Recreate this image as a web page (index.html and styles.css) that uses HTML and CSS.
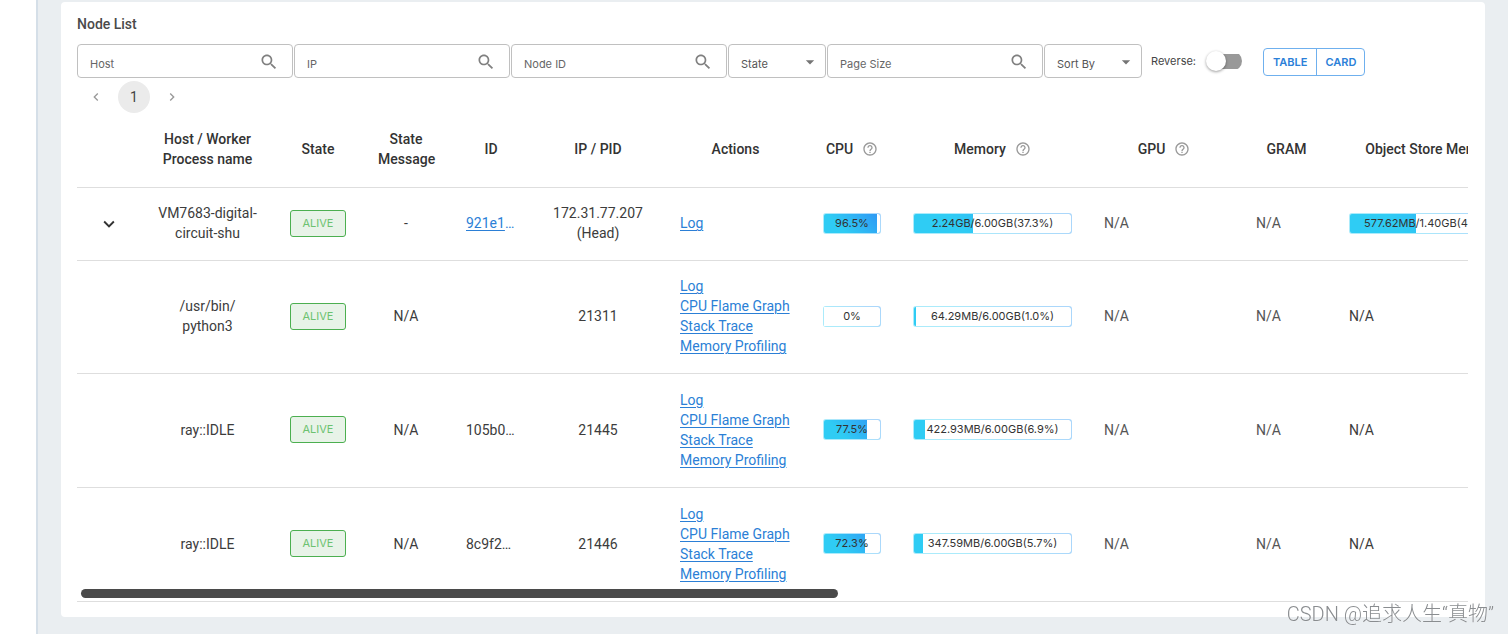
FILE: index.html
```html
<!DOCTYPE html>
<html lang="en">
<head>
<meta charset="utf-8">
<title>Node List</title>
<link rel="stylesheet" href="styles.css">
</head>
<body>
<svg class="sprite" aria-hidden="true">
  <symbol id="search" viewBox="0 0 24 24"><path d="M15.5 14h-.79l-.28-.27C15.41 12.59 16 11.11 16 9.5 16 5.91 13.09 3 9.5 3S3 5.91 3 9.5 5.91 16 9.5 16c1.61 0 3.09-.59 4.23-1.57l.27.28v.79l5 4.99L20.49 19l-4.99-5zm-6 0C7.01 14 5 11.99 5 9.5S7.01 5 9.5 5 14 7.01 14 9.5 11.99 14 9.5 14z"/></symbol>
  <symbol id="drop" viewBox="0 0 24 24"><path d="M7 10l5 5 5-5z"/></symbol>
  <symbol id="prev" viewBox="0 0 24 24"><path d="M15.41 7.41L14 6l-6 6 6 6 1.41-1.41L10.83 12z"/></symbol>
  <symbol id="next" viewBox="0 0 24 24"><path d="M10 6L8.59 7.41 13.17 12l-4.58 4.59L10 18l6-6z"/></symbol>
  <symbol id="expand" viewBox="0 0 24 24"><path d="M16.59 8.59L12 13.17 7.41 8.59 6 10l6 6 6-6z"/></symbol>
  <symbol id="help" viewBox="0 0 24 24"><path d="M11 18h2v-2h-2v2zm1-16C6.48 2 2 6.48 2 12s4.48 10 10 10 10-4.48 10-10S17.52 2 12 2zm0 18c-4.41 0-8-3.59-8-8s3.59-8 8-8 8 3.59 8 8-3.59 8-8 8zm0-14c-2.21 0-4 1.79-4 4h2c0-1.1.9-2 2-2s2 .9 2 2c0 2-3 1.75-3 5h2c0-2.25 3-2.5 3-5 0-2.21-1.79-4-4-4z"/></symbol>
</svg>
<div class="app">
  <aside class="rail"></aside>
  <main class="main">
    <section class="card">
      <h2 class="title">Node List</h2>
      <form class="filters">
        <label class="field"><input type="text" placeholder="Host" aria-label="Host"><svg class="search-icon"><use href="#search"/></svg></label>
        <label class="field"><input type="text" placeholder="IP" aria-label="IP"><svg class="search-icon"><use href="#search"/></svg></label>
        <label class="field"><input type="text" placeholder="Node ID" aria-label="Node ID"><svg class="search-icon"><use href="#search"/></svg></label>
        <label class="field field-select"><select aria-label="State"><option>State</option></select><svg class="drop-icon"><use href="#drop"/></svg></label>
        <label class="field"><input type="text" placeholder="Page Size" aria-label="Page Size"><svg class="search-icon"><use href="#search"/></svg></label>
        <label class="field field-select"><select aria-label="Sort By"><option>Sort By</option></select><svg class="drop-icon"><use href="#drop"/></svg></label>
        <label class="reverse">Reverse:<input class="switch" type="checkbox"></label>
        <div class="view-group"><button type="button">TABLE</button><button type="button">CARD</button></div>
      </form>
      <nav class="pager" aria-label="Pages">
        <button type="button" aria-label="Previous page"><svg><use href="#prev"/></svg></button>
        <button type="button" class="current">1</button>
        <button type="button" aria-label="Next page"><svg><use href="#next"/></svg></button>
      </nav>
      <div class="table-box">
        <table class="nodes">
          <colgroup>
            <col class="c-expand"><col class="c-host"><col class="c-state"><col class="c-message"><col class="c-id"><col class="c-ip"><col class="c-actions"><col class="c-cpu"><col class="c-memory"><col class="c-gpu"><col class="c-gram"><col class="c-store">
          </colgroup>
          <thead>
            <tr>
              <th></th><th>Host / Worker Process name</th><th>State</th><th>State Message</th><th>ID</th><th>IP / PID</th><th>Actions</th>
              <th><span class="head">CPU<svg><use href="#help"/></svg></span></th>
              <th><span class="head">Memory<svg><use href="#help"/></svg></span></th>
              <th><span class="head">GPU<svg><use href="#help"/></svg></span></th>
              <th>GRAM</th><th>Object Store Memory</th>
            </tr>
          </thead>
          <tbody>
            <tr>
              <td><button type="button" class="toggle" aria-label="Collapse"><svg><use href="#expand"/></svg></button></td>
              <td>VM7683-digital-circuit-shu</td>
              <td><span class="chip">ALIVE</span></td>
              <td>-</td>
              <td class="left"><a class="id-link" href="#node"><span>921e1</span>…</a></td>
              <td>172.31.77.207 (Head)</td>
              <td class="left"><div class="actions"><a href="#log">Log</a></div></td>
              <td><div class="bar"><i style="width:6%"></i><span>96.5%</span></div></td>
              <td><div class="bar"><i style="width:62.7%"></i><span>2.24GB/6.00GB(37.3%)</span></div></td>
              <td class="left soft">N/A</td><td class="left soft">N/A</td>
              <td><div class="bar"><i style="width:59.7%"></i><span>577.62MB/1.40GB(40.3%)</span></div></td>
            </tr>
            <tr class="first-worker">
              <td></td>
              <td>/usr/bin/<br>python3</td>
              <td><span class="chip">ALIVE</span></td>
              <td>N/A</td>
              <td></td>
              <td>21311</td>
              <td class="left"><div class="actions"><a href="#log">Log</a><a href="#flame">CPU Flame Graph</a><a href="#stack">Stack Trace</a><a href="#memory">Memory Profiling</a></div></td>
              <td><div class="bar"><i style="width:100%"></i><span>0%</span></div></td>
              <td><div class="bar"><i style="width:99%"></i><span>64.29MB/6.00GB(1.0%)</span></div></td>
              <td class="left soft">N/A</td><td class="left soft">N/A</td><td class="left">N/A</td>
            </tr>
            <tr class="worker">
              <td></td>
              <td>ray::IDLE</td>
              <td><span class="chip">ALIVE</span></td>
              <td>N/A</td>
              <td class="left">105b0…</td>
              <td>21445</td>
              <td class="left"><div class="actions"><a href="#log">Log</a><a href="#flame">CPU Flame Graph</a><a href="#stack">Stack Trace</a><a href="#memory">Memory Profiling</a></div></td>
              <td><div class="bar"><i style="width:22.5%"></i><span>77.5%</span></div></td>
              <td><div class="bar"><i style="width:93.1%"></i><span>422.93MB/6.00GB(6.9%)</span></div></td>
              <td class="left soft">N/A</td><td class="left soft">N/A</td><td class="left">N/A</td>
            </tr>
            <tr class="worker">
              <td></td>
              <td>ray::IDLE</td>
              <td><span class="chip">ALIVE</span></td>
              <td>N/A</td>
              <td class="left">8c9f2…</td>
              <td>21446</td>
              <td class="left"><div class="actions"><a href="#log">Log</a><a href="#flame">CPU Flame Graph</a><a href="#stack">Stack Trace</a><a href="#memory">Memory Profiling</a></div></td>
              <td><div class="bar"><i style="width:27.7%"></i><span>72.3%</span></div></td>
              <td><div class="bar"><i style="width:94.3%"></i><span>347.59MB/6.00GB(5.7%)</span></div></td>
              <td class="left soft">N/A</td><td class="left soft">N/A</td><td class="left">N/A</td>
            </tr>
          </tbody>
        </table>
        <div class="scroll-thumb"></div>
      </div>
    </section>
  </main>
</div>
<div class="watermark">CSDN @追求人生“真物”</div>
</body>
</html>
```
FILE: styles.css
```css
* { box-sizing: border-box; }

body {
  margin: 0;
  font: 14px/20px Roboto, "Liberation Sans", sans-serif;
  color: #3c3c3c;
  background: #eaeef1;
}

button, input, select { font: inherit; color: inherit; margin: 0; }
button { padding: 0; border: 0; background: none; cursor: pointer; }
svg { display: block; fill: currentColor; }
a { color: #2b7fd6; text-decoration: underline; text-underline-offset: 2px; text-decoration-thickness: 1px; }

.sprite { position: absolute; width: 0; height: 0; }

.app { display: flex; min-height: 100vh; }
.rail { flex: none; width: 38px; background: #fff; border-right: 2px solid #d5dfe8; }
.main { flex: 1; min-width: 0; padding: 2px 23px 16px; }
.card { padding: 12px 17px 15px 16px; background: #fff; border-radius: 4px; }
.title { margin: 0 0 10px; font-size: 14px; line-height: 20px; font-weight: 500; color: #4a4a4a; }

.filters { display: flex; align-items: center; gap: 1px; font: 11px/16px Inter, Roboto, sans-serif; color: #555; }
.field { position: relative; width: 216px; height: 34px; }
.field-select { width: 98px; }
.field input, .field select {
  width: 100%;
  height: 100%;
  padding: 5px 40px 0 12px;
  border: 1px solid #c0c0c0;
  border-radius: 4px;
  background: #fff;
  appearance: none;
  outline: 0;
}
.field select { padding-right: 20px; }
.field input::placeholder { color: #666; opacity: 1; }
.search-icon { position: absolute; top: 8px; right: 14px; width: 20px; height: 20px; color: #808080; }
.drop-icon { position: absolute; top: 8px; right: 6px; width: 20px; height: 20px; color: #757575; }

.reverse { display: flex; align-items: center; gap: 10px; margin-left: 8px; color: #444; }
.switch {
  display: flex;
  align-items: center;
  appearance: none;
  width: 36px;
  height: 20px;
  background: linear-gradient(#999, #999) right center / 28px 15px no-repeat;
  border-radius: 10px;
}
.switch::before {
  content: "";
  width: 20px;
  height: 20px;
  border-radius: 50%;
  background: #fff;
  box-shadow: 0 1px 3px rgba(0, 0, 0, .4);
}

.view-group { display: flex; margin: 2px 0 0 20px; border: 1px solid #6fb0ee; border-radius: 4px; }
.view-group button { height: 26px; padding: 0 9px; font-weight: 600; color: #2b80d8; }
.view-group button + button { padding: 0 8px; border-left: 1px solid #6fb0ee; }

.pager { display: flex; gap: 6px; margin-top: 3px; padding-left: 3px; }
.pager button { display: grid; place-items: center; width: 32px; height: 32px; border-radius: 50%; color: #999; }
.pager svg { width: 16px; height: 16px; }
.pager .current { background: #ebebeb; color: #444; }

.table-box { position: relative; overflow: hidden; }
.nodes { width: 1453px; table-layout: fixed; border-collapse: separate; border-spacing: 0; }
.c-expand { width: 64px; }
.c-host { width: 133px; }
.c-state { width: 88px; }
.c-message { width: 88px; }
.c-id { width: 82px; }
.c-ip { width: 132px; }
.c-actions { width: 143px; }
.c-cpu { width: 90px; }
.c-memory { width: 191px; }
.c-gpu { width: 152px; }
.c-gram { width: 93px; }
.c-store { width: 197px; }
.nodes th, .nodes td { padding: 15px 16px 17px; border-bottom: 1px solid #dedede; text-align: center; vertical-align: middle; }
.nodes th { height: 75px; font-weight: 500; color: #333; white-space: normal; }
.nodes th:last-child { white-space: nowrap; }
.nodes td.left { text-align: left; }
.nodes td.soft { color: #555; }
.nodes .first-worker td { height: 113px; }
.nodes .worker td { height: 114px; }

.head { display: inline-flex; align-items: center; gap: 9px; }
.head svg { width: 16px; height: 16px; color: #999; }
.toggle { display: grid; place-items: center; width: 32px; height: 20px; color: #333; }
.toggle svg { width: 22px; height: 22px; }

.chip {
  display: block;
  border: 1px solid #4caf50;
  border-radius: 3px;
  background: #e8f3e8;
  color: #6cc270;
  font: 11px/25px Inter, Roboto, sans-serif;
}
.id-link { text-decoration: none; }
.id-link span { text-decoration: underline; }
.actions { display: flex; flex-direction: column; align-items: flex-start; white-space: nowrap; }

.bar {
  display: grid;
  align-items: stretch;
  border: 1px solid rgba(255, 255, 255, .6);
  border-radius: 3px;
  background: linear-gradient(45deg, #2fccf4 30%, #2f9cf4 90%) border-box;
}
.bar i { grid-area: 1 / 1; justify-self: end; background: #fff; border-radius: 0 2px 2px 0; }
.bar span { grid-area: 1 / 1; font: 11px/19px Inter, Roboto, sans-serif; color: #333; white-space: nowrap; z-index: 1; }

.scroll-thumb { position: absolute; left: 4px; bottom: 4px; width: 757px; height: 9px; border-radius: 5px; background: #4a4a4a; }

.watermark {
  position: fixed;
  right: 14px;
  bottom: 7px;
  font: 300 20px/26px Roboto, "Noto Sans CJK SC", sans-serif;
  color: #8a8d90;
  text-shadow: 0 0 1px #fff;
}
```
